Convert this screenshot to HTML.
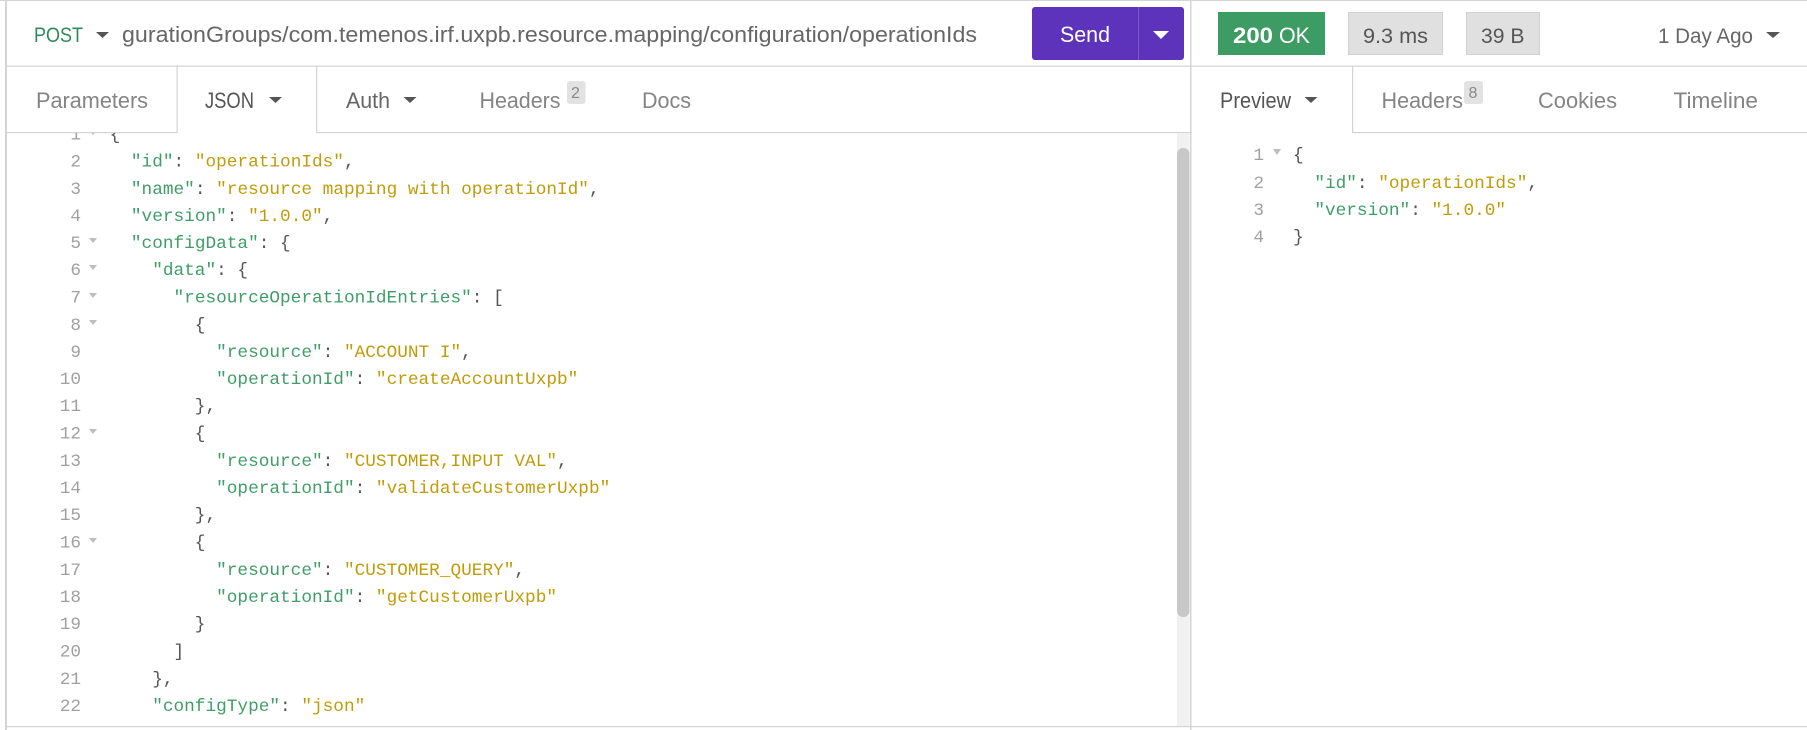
<!DOCTYPE html>
<html><head><meta charset="utf-8"><style>
html,body{margin:0;padding:0;background:#fff;width:1807px;height:730px;overflow:hidden}
svg{display:block}
text{font-family:"Liberation Sans",sans-serif;white-space:pre}
.t{font-size:22px;fill:#848484}
.a{font-size:22px;fill:#555}
.c text,text.c{font-family:"Liberation Mono",monospace;font-size:17.75px;fill:#555}
.k{fill:#3f9e68}.s{fill:#c09c0a}
.n text{font-family:"Liberation Mono",monospace;font-size:17.75px;fill:#a0a0a0;text-anchor:end}
</style></head><body>
<svg width="1807" height="730" viewBox="0 0 1807 730" xmlns="http://www.w3.org/2000/svg">
<defs><clipPath id="ed"><rect x="7" y="133" width="1170" height="593"/></clipPath></defs>
<rect width="1807" height="730" fill="#fff"/>
<rect x="0" y="0" width="1807" height="1" fill="#d4d4d4"/>
<rect x="5" y="0" width="2" height="730" fill="#d4d4d4"/>
<rect x="1190" y="0" width="1.5" height="730" fill="#d4d4d4"/>
<rect x="5" y="65.5" width="1802" height="1.2" fill="#d4d4d4"/>
<rect x="5" y="132" width="1802" height="1.2" fill="#d4d4d4"/>
<rect x="5" y="726" width="1802" height="1.2" fill="#d4d4d4"/>
<!-- active tabs -->
<rect x="177" y="67" width="139" height="67" fill="#fff"/>
<rect x="176.500" y="66" width="1.2" height="67" fill="#d4d4d4"/>
<rect x="316" y="66" width="1.2" height="67" fill="#d4d4d4"/>
<rect x="1192" y="67" width="160" height="67" fill="#fff"/>
<rect x="1352" y="66" width="1.2" height="67" fill="#d4d4d4"/>
<!-- url bar -->
<text x="34" y="42" font-size="21" fill="#2f8a5b" textLength="49" lengthAdjust="spacingAndGlyphs">POST</text>
<path d="M96 32h13l-6.500 6z" fill="#555"/>
<text x="122" y="42" font-size="22" fill="#666" textLength="855" lengthAdjust="spacingAndGlyphs">gurationGroups/com.temenos.irf.uxpb.resource.mapping/configuration/operationIds</text>
<rect x="1032" y="7" width="152" height="53" rx="3" fill="#5e33bb"/>
<rect x="1138" y="7" width="1" height="53" fill="#7a5cc4"/>
<text x="1060" y="42" font-size="22" fill="#fff" textLength="50" lengthAdjust="spacingAndGlyphs">Send</text>
<path d="M1153 31h16l-8 8z" fill="#fff"/>
<!-- tabs left -->
<text class="t" x="36" y="108" textLength="112" lengthAdjust="spacingAndGlyphs">Parameters</text>
<text class="a" x="205" y="108" textLength="49" lengthAdjust="spacingAndGlyphs">JSON</text>
<path d="M269 97h13l-6.500 6z" fill="#555"/>
<text class="a" x="346" y="108" textLength="44" lengthAdjust="spacingAndGlyphs" style="fill:#666">Auth</text>
<path d="M403.500 97h13l-6.500 6z" fill="#555"/>
<text class="t" x="479.500" y="108" textLength="81" lengthAdjust="spacingAndGlyphs">Headers</text>
<rect x="567" y="81" width="18.500" height="23" rx="3" fill="#e2e2e2"/>
<text x="571" y="98" font-size="16" fill="#888">2</text>
<text class="t" x="642" y="108" textLength="49" lengthAdjust="spacingAndGlyphs">Docs</text>
<!-- status right -->
<rect x="1218" y="12" width="107" height="43" fill="#3d9c63"/>
<text x="1233" y="43" font-size="22" font-weight="bold" fill="#fff" textLength="40" lengthAdjust="spacingAndGlyphs">200</text>
<text x="1279" y="43" font-size="22" fill="#fff" textLength="31" lengthAdjust="spacingAndGlyphs">OK</text>
<rect x="1348.500" y="12.500" width="94" height="42" fill="#e0e0e0" stroke="#d2d2d2"/>
<text x="1363" y="43" font-size="21" fill="#555" textLength="65" lengthAdjust="spacingAndGlyphs">9.3 ms</text>
<rect x="1466.500" y="12.500" width="73" height="42" fill="#e0e0e0" stroke="#d2d2d2"/>
<text x="1481" y="43" font-size="21" fill="#555" textLength="43.500" lengthAdjust="spacingAndGlyphs">39 B</text>
<text x="1658" y="43" font-size="21" fill="#666" textLength="95" lengthAdjust="spacingAndGlyphs">1 Day Ago</text>
<path d="M1766 32h14l-7 6z" fill="#555"/>
<!-- tabs right -->
<text class="a" x="1220" y="108" textLength="71" lengthAdjust="spacingAndGlyphs">Preview</text>
<path d="M1304.500 97h13l-6.500 6z" fill="#555"/>
<text class="t" x="1381.500" y="108" textLength="81.500" lengthAdjust="spacingAndGlyphs">Headers</text>
<rect x="1464" y="81" width="19" height="23" rx="3" fill="#e2e2e2"/>
<text x="1468.500" y="98" font-size="16" fill="#888">8</text>
<text class="t" x="1538" y="108" textLength="79" lengthAdjust="spacingAndGlyphs">Cookies</text>
<text class="t" x="1673.500" y="108" textLength="84.500" lengthAdjust="spacingAndGlyphs">Timeline</text>
<!-- scrollbar -->
<rect x="1177" y="133" width="12.500" height="593" fill="#f1f1f1"/>
<rect x="1177" y="148" width="12.500" height="469" rx="6" fill="#c8c8c8"/>
<!-- editor -->
<g clip-path="url(#ed)">
<g class="n">
<text x="81" y="139.500">1</text><text x="81" y="166.500">2</text><text x="81" y="194">3</text><text x="81" y="221">4</text><text x="81" y="248">5</text><text x="81" y="275">6</text><text x="81" y="302.500">7</text><text x="81" y="330">8</text><text x="81" y="357">9</text><text x="81" y="384">10</text><text x="81" y="411">11</text><text x="81" y="438.500">12</text><text x="81" y="466">13</text><text x="81" y="493">14</text><text x="81" y="520">15</text><text x="81" y="547.500">16</text><text x="81" y="575">17</text><text x="81" y="602">18</text><text x="81" y="629">19</text><text x="81" y="656.500">20</text><text x="81" y="684">21</text><text x="81" y="711">22</text>
</g>
<path d="M89 130h8l-4 5zM89 238h8l-4 5zM89 265h8l-4 5zM89 293h8l-4 5zM89 320h8l-4 5zM89 429h8l-4 5zM89 538h8l-4 5z" fill="#bdbdbd"/>
<g class="c">
<text x="109.600" y="139.500">{</text>
<text x="109.600" y="166.500">  <tspan class="k">"id"</tspan>: <tspan class="s">"operationIds"</tspan>,</text>
<text x="109.600" y="194">  <tspan class="k">"name"</tspan>: <tspan class="s">"resource mapping with operationId"</tspan>,</text>
<text x="109.600" y="221">  <tspan class="k">"version"</tspan>: <tspan class="s">"1.0.0"</tspan>,</text>
<text x="109.600" y="248">  <tspan class="k">"configData"</tspan>: {</text>
<text x="109.600" y="275">    <tspan class="k">"data"</tspan>: {</text>
<text x="109.600" y="302.500">      <tspan class="k">"resourceOperationIdEntries"</tspan>: [</text>
<text x="109.600" y="330">        {</text>
<text x="109.600" y="357">          <tspan class="k">"resource"</tspan>: <tspan class="s">"ACCOUNT I"</tspan>,</text>
<text x="109.600" y="384">          <tspan class="k">"operationId"</tspan>: <tspan class="s">"createAccountUxpb"</tspan></text>
<text x="109.600" y="411">        },</text>
<text x="109.600" y="438.500">        {</text>
<text x="109.600" y="466">          <tspan class="k">"resource"</tspan>: <tspan class="s">"CUSTOMER,INPUT VAL"</tspan>,</text>
<text x="109.600" y="493">          <tspan class="k">"operationId"</tspan>: <tspan class="s">"validateCustomerUxpb"</tspan></text>
<text x="109.600" y="520">        },</text>
<text x="109.600" y="547.500">        {</text>
<text x="109.600" y="575">          <tspan class="k">"resource"</tspan>: <tspan class="s">"CUSTOMER_QUERY"</tspan>,</text>
<text x="109.600" y="602">          <tspan class="k">"operationId"</tspan>: <tspan class="s">"getCustomerUxpb"</tspan></text>
<text x="109.600" y="629">        }</text>
<text x="109.600" y="656.500">      ]</text>
<text x="109.600" y="684">    },</text>
<text x="109.600" y="711">    <tspan class="k">"configType"</tspan>: <tspan class="s">"json"</tspan></text>
</g>
</g>
<!-- preview -->
<g class="n">
<text x="1264" y="160">1</text><text x="1264" y="188">2</text><text x="1264" y="215">3</text><text x="1264" y="242">4</text>
</g>
<path d="M1273 149h8l-4 6z" fill="#bdbdbd"/>
<g class="c">
<text x="1293" y="160">{</text>
<text x="1293" y="188">  <tspan class="k">"id"</tspan>: <tspan class="s">"operationIds"</tspan>,</text>
<text x="1293" y="215">  <tspan class="k">"version"</tspan>: <tspan class="s">"1.0.0"</tspan></text>
<text x="1293" y="242">}</text>
</g>
</svg>
</body></html>
